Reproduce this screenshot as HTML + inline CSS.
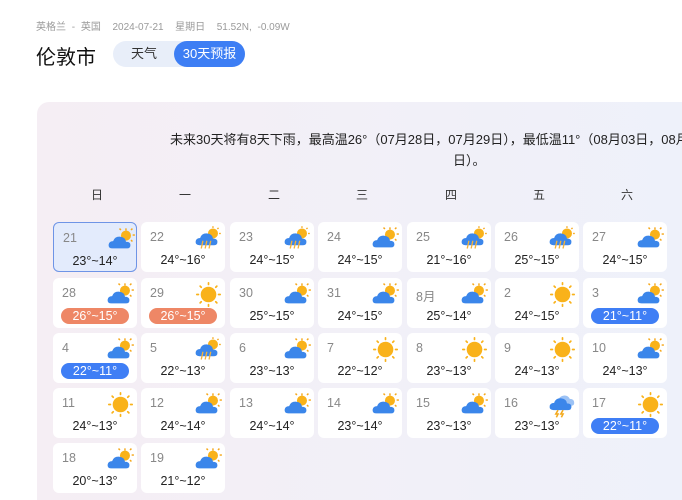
<!DOCTYPE html>
<html><head><meta charset="utf-8"><style>
*{margin:0;padding:0;box-sizing:border-box}
html,body{width:682px;height:500px;overflow:hidden}
body{background:#fff;font-family:"Liberation Sans","Noto Sans CJK SC",sans-serif;position:relative}
.meta{position:absolute;left:36px;top:18px;font-size:10px;color:#9a9a9a;word-spacing:3px}
.city{position:absolute;left:36px;top:41px;font-size:20px;color:#111}
.tabs{position:absolute;left:113px;top:41px;width:132px;height:26px;border-radius:13px;background:#e8eef9}
.tabs .a{position:absolute;left:0;top:0;width:62px;height:26px;line-height:26px;text-align:center;font-size:13px;color:#333}
.tabs .b{position:absolute;left:61px;top:0;width:71px;height:26px;line-height:26px;text-align:center;font-size:13px;color:#fff;background:#3d7ef4;border-radius:13px}
.panel{position:absolute;left:37px;top:102px;width:660px;height:398px;border-radius:12px 0 0 0;background:linear-gradient(90deg,#f5eef4 0%,#f1f0f8 60%,#eef1fa 100%)}
.sum{position:absolute;font-size:13px;color:#222;white-space:nowrap}
.wd{position:absolute;top:186px;width:30px;margin-left:-15px;text-align:center;font-size:12px;color:#333}
.c{position:absolute;width:84px;height:50px;background:#fff;border-radius:6px}
.c.sel{background:#e3ebfc;border:1px solid #6e94e6}
.c .d{position:absolute;left:9px;top:8px;font-size:12.5px;color:#888}
.c .t{position:absolute;left:0;right:0;top:31px;text-align:center;font-size:12.5px;color:#222}
.c .p{position:absolute;left:8px;right:8px;top:30px;height:16px;line-height:16px;border-radius:8px;text-align:center;font-size:12.5px;color:#fff}
.o{background:#ee8766}.bl{background:#3f7ef5}
.c svg{position:absolute;left:53px;top:3px;width:29px;height:27px}
</style></head><body>
<svg width="0" height="0" style="position:absolute">
<defs>
<symbol id="pc" viewBox="0 0 26 24"><g stroke="#f6a81c" stroke-width="1.3"><line x1="17" y1="2" x2="17" y2="4"/><line x1="23" y1="8" x2="25" y2="8"/><line x1="21.5" y1="3.5" x2="22.8" y2="2.2"/><line x1="12.5" y1="3.5" x2="11.2" y2="2.2"/><line x1="21.5" y1="12.5" x2="22.8" y2="13.8"/></g><circle cx="17" cy="8.5" r="4.5" fill="#f9b21a"/><path d="M5 20 Q1 20 1.5 16.5 Q2 13.5 5.5 13.5 Q7 9 12 9.5 Q16.5 10 17 14 Q21 14 21 17 Q21 20 18 20 Z" fill="#3b86ea"/></symbol>
<symbol id="s" viewBox="0 0 26 24"><circle cx="13" cy="12" r="7" fill="#f9b21a"/><g stroke="#f9b21a" stroke-width="1.5" stroke-linecap="round"><line x1="13" y1="1.5" x2="13" y2="3"/><line x1="13" y1="21" x2="13" y2="22.5"/><line x1="2.5" y1="12" x2="4" y2="12"/><line x1="22" y1="12" x2="23.5" y2="12"/><line x1="5.5" y1="4.5" x2="6.5" y2="5.5"/><line x1="19.5" y1="18.5" x2="20.5" y2="19.5"/><line x1="5.5" y1="19.5" x2="6.5" y2="18.5"/><line x1="19.5" y1="5.5" x2="20.5" y2="4.5"/></g></symbol>
<symbol id="r" viewBox="0 0 26 24"><circle cx="17" cy="7.5" r="4.5" fill="#f9b21a"/><g stroke="#f6a81c" stroke-width="1.2"><line x1="17" y1="1" x2="17" y2="2.5"/><line x1="22.5" y1="7.5" x2="24" y2="7.5"/><line x1="21" y1="3.5" x2="22" y2="2.5"/></g><path d="M5 18 Q1 18 1.5 14.5 Q2 11.5 5.5 11.5 Q7 7 12 7.5 Q16.5 8 17 12 Q21 12 21 15 Q21 18 18 18 Z" fill="#3b86ea"/><g stroke="#f3b23a" stroke-width="1.2"><line x1="8" y1="14" x2="6.5" y2="21"/><line x1="11.5" y1="14" x2="10" y2="21"/><line x1="15" y1="14" x2="13.5" y2="21"/></g></symbol>
<symbol id="t" viewBox="0 0 26 24"><path d="M10 12 Q8 5 14 4 Q18 3.5 19.5 7 Q23.5 7 23.5 10.5 Q23.5 13 21 13 Z" fill="#9cc2f5"/><path d="M5 17 Q1 17 1.5 13.5 Q2 10.5 5.5 10.5 Q7 6 12 6.5 Q16.5 7 17 11 Q21 11 21 14 Q21 17 18 17 Z" fill="#3b86ea"/><g stroke="#f3a91c" stroke-width="1.4" fill="none"><path d="M9 17 L7 20.5 L9 20.5 L7.5 23.5"/><path d="M13.5 17 L11.5 20.5 L13.5 20.5 L12 23.5"/></g></symbol>
</defs></svg>
<div class="meta">英格兰 - 英国 &nbsp;2024-07-21 &nbsp;星期日 &nbsp;51.52N, -0.09W</div>
<div class="city">伦敦市</div>
<div class="tabs"><div class="a">天气</div><div class="b">30天预报</div></div>
<div class="panel"></div>
<div class="sum" style="left:170px;top:129px">未来30天将有8天下雨，最高温26°（07月28日，07月29日），最低温11°（08月03日，08月04</div>
<div class="sum" style="left:453px;top:150px">日）。</div>
<div class="wd" style="left:97px">日</div><div class="wd" style="left:185px">一</div><div class="wd" style="left:274px">二</div><div class="wd" style="left:362px">三</div><div class="wd" style="left:451px">四</div><div class="wd" style="left:539px">五</div><div class="wd" style="left:627px">六</div>

<div class="c sel" style="left:53px;top:222px"><span class="d">21</span><svg><use href="#pc"/></svg><div class="t">23°~14°</div></div>
<div class="c" style="left:141px;top:222px"><span class="d">22</span><svg><use href="#r"/></svg><div class="t">24°~16°</div></div>
<div class="c" style="left:230px;top:222px"><span class="d">23</span><svg><use href="#r"/></svg><div class="t">24°~15°</div></div>
<div class="c" style="left:318px;top:222px"><span class="d">24</span><svg><use href="#pc"/></svg><div class="t">24°~15°</div></div>
<div class="c" style="left:407px;top:222px"><span class="d">25</span><svg><use href="#r"/></svg><div class="t">21°~16°</div></div>
<div class="c" style="left:495px;top:222px"><span class="d">26</span><svg><use href="#r"/></svg><div class="t">25°~15°</div></div>
<div class="c" style="left:583px;top:222px"><span class="d">27</span><svg><use href="#pc"/></svg><div class="t">24°~15°</div></div>

<div class="c" style="left:53px;top:278px"><span class="d">28</span><svg><use href="#pc"/></svg><div class="p o">26°~15°</div></div>
<div class="c" style="left:141px;top:278px"><span class="d">29</span><svg><use href="#s"/></svg><div class="p o">26°~15°</div></div>
<div class="c" style="left:230px;top:278px"><span class="d">30</span><svg><use href="#pc"/></svg><div class="t">25°~15°</div></div>
<div class="c" style="left:318px;top:278px"><span class="d">31</span><svg><use href="#pc"/></svg><div class="t">24°~15°</div></div>
<div class="c" style="left:407px;top:278px"><span class="d">8月</span><svg><use href="#pc"/></svg><div class="t">25°~14°</div></div>
<div class="c" style="left:495px;top:278px"><span class="d">2</span><svg><use href="#s"/></svg><div class="t">24°~15°</div></div>
<div class="c" style="left:583px;top:278px"><span class="d">3</span><svg><use href="#pc"/></svg><div class="p bl">21°~11°</div></div>

<div class="c" style="left:53px;top:333px"><span class="d">4</span><svg><use href="#pc"/></svg><div class="p bl">22°~11°</div></div>
<div class="c" style="left:141px;top:333px"><span class="d">5</span><svg><use href="#r"/></svg><div class="t">22°~13°</div></div>
<div class="c" style="left:230px;top:333px"><span class="d">6</span><svg><use href="#pc"/></svg><div class="t">23°~13°</div></div>
<div class="c" style="left:318px;top:333px"><span class="d">7</span><svg><use href="#s"/></svg><div class="t">22°~12°</div></div>
<div class="c" style="left:407px;top:333px"><span class="d">8</span><svg><use href="#s"/></svg><div class="t">23°~13°</div></div>
<div class="c" style="left:495px;top:333px"><span class="d">9</span><svg><use href="#s"/></svg><div class="t">24°~13°</div></div>
<div class="c" style="left:583px;top:333px"><span class="d">10</span><svg><use href="#pc"/></svg><div class="t">24°~13°</div></div>

<div class="c" style="left:53px;top:388px"><span class="d">11</span><svg><use href="#s"/></svg><div class="t">24°~13°</div></div>
<div class="c" style="left:141px;top:388px"><span class="d">12</span><svg><use href="#pc"/></svg><div class="t">24°~14°</div></div>
<div class="c" style="left:230px;top:388px"><span class="d">13</span><svg><use href="#pc"/></svg><div class="t">24°~14°</div></div>
<div class="c" style="left:318px;top:388px"><span class="d">14</span><svg><use href="#pc"/></svg><div class="t">23°~14°</div></div>
<div class="c" style="left:407px;top:388px"><span class="d">15</span><svg><use href="#pc"/></svg><div class="t">23°~13°</div></div>
<div class="c" style="left:495px;top:388px"><span class="d">16</span><svg><use href="#t"/></svg><div class="t">23°~13°</div></div>
<div class="c" style="left:583px;top:388px"><span class="d">17</span><svg><use href="#s"/></svg><div class="p bl">22°~11°</div></div>

<div class="c" style="left:53px;top:443px"><span class="d">18</span><svg><use href="#pc"/></svg><div class="t">20°~13°</div></div>
<div class="c" style="left:141px;top:443px"><span class="d">19</span><svg><use href="#pc"/></svg><div class="t">21°~12°</div></div>
</body></html>
